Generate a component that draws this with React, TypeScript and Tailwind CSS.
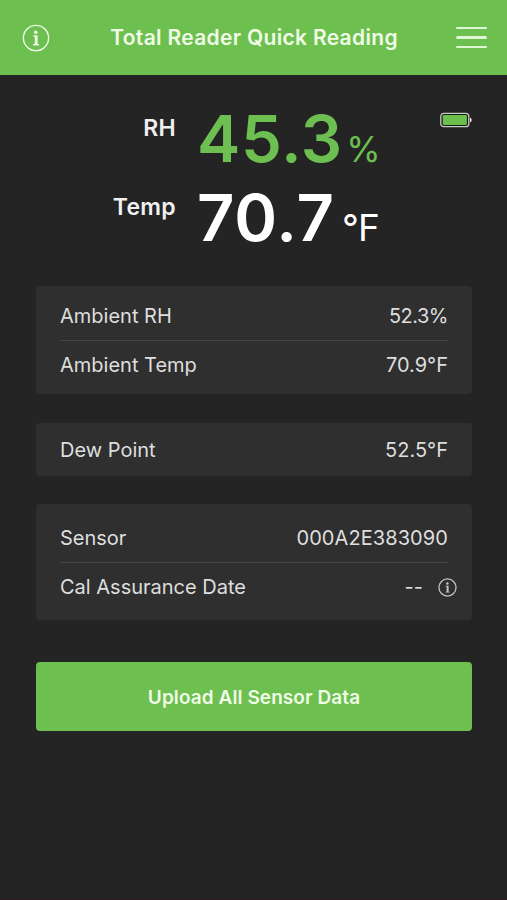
import type { ReactNode } from "react";

function InfoIcon({ className, stroke }: { className: string; stroke: number }) {
  return (
    <svg viewBox="0 0 28 28" className={className} fill="none" stroke="currentColor">
      <circle cx="14" cy="14" r="12.6" strokeWidth={stroke} />
      <circle cx="13.8" cy="8.2" r="1.8" fill="currentColor" stroke="none" />
      <path
        d="M11.2 11.3h4.4v8.8h1.5v1.3h-6v-1.3h1.7v-7.5h-1.6z"
        fill="currentColor"
        stroke="none"
      />
    </svg>
  );
}

function Battery() {
  return (
    <svg width="32" height="16" viewBox="0 0 32 16" className="block">
      <rect x="0.8" y="1.3" width="28" height="13.4" rx="3" fill="#161a14" stroke="#c9cbc6" strokeWidth="1.3" />
      <rect x="2.7" y="3.1" width="24.2" height="9.8" rx="1.2" fill="#6cbf4b" />
      <path d="M30 5.6q1.7 .6 1.7 2.4t-1.7 2.4z" fill="#e4e4e4" />
    </svg>
  );
}

function Row({ label, children }: { label: string; children: ReactNode }) {
  return (
    <div className="flex h-12 items-center justify-between">
      <span>{label}</span>
      {children}
    </div>
  );
}

export default function App() {
  return (
    <div className="flex h-[900px] w-[507px] flex-col bg-[#242424] font-['Inter',sans-serif] text-[#dedede]">
      <header className="flex h-[75px] shrink-0 items-center justify-between bg-[#6dbf4f] pr-5 pl-[22px] text-[#effce6]">
        <InfoIcon className="size-7" stroke={1.4} />
        <h1 className="mt-px ml-[2px] text-[21px] leading-[26px] font-semibold tracking-[0.32px] whitespace-nowrap">
          Total Reader Quick Reading
        </h1>
        <div className="flex w-[31px] flex-col gap-[7px]">
          <span className="h-[2.5px] rounded-full bg-[#dff6d3]" />
          <span className="h-[2.5px] rounded-full bg-[#dff6d3]" />
          <span className="h-[2.5px] rounded-full bg-[#dff6d3]" />
        </div>
      </header>

      <section className="flex h-[211px] shrink-0 pt-8 pr-[35px]">
        <div className="flex w-[176px] flex-col text-right text-[23px] leading-[42px] font-semibold tracking-[0.3px] text-[#f0f0f0]">
          <span className="h-[79px]">RH</span>
          <span>Temp</span>
        </div>
        <div className="ml-[21px] flex w-[182px] flex-col">
          <div className="flex h-[79px] items-baseline justify-between text-[#6cbf50]">
            <span className="text-[65px] leading-[64px] font-[560] tracking-[0.7px]">45.3</span>
            <span className="text-[35px] leading-[40px] font-normal tracking-[-1.6px]">%</span>
          </div>
          <div className="flex items-baseline justify-between text-white">
            <span className="text-[65px] leading-[64px] font-[560] tracking-[0.9px]">70.7</span>
            <span className="text-[37px] leading-[40px] font-normal tracking-[-0.8px]">°F</span>
          </div>
        </div>
        <div className="mt-[5px] ml-auto">
          <Battery />
        </div>
      </section>

      <main className="flex flex-col pr-[35px] pl-9 text-[20px] leading-6">
        <section className="h-[108px] rounded-[4px] bg-[#2f2f2f] px-6 pt-[6px]">
          <Row label="Ambient RH"><span className="tracking-[-0.5px]">52.3%</span></Row>
          <div className="h-px bg-[#444]" />
          <Row label="Ambient Temp"><span>70.9°F</span></Row>
        </section>
        <section className="mt-[29px] h-[53px] rounded-[4px] bg-[#2f2f2f] px-6 pt-[3px]">
          <Row label="Dew Point"><span>52.5°F</span></Row>
        </section>
        <section className="mt-7 h-[116px] rounded-[4px] bg-[#2f2f2f] px-6 pt-[10px]">
          <Row label="Sensor"><span className="tracking-[0.08px]">000A2E383090</span></Row>
          <div className="h-px bg-[#444]" />
          <Row label="Cal Assurance Date">
            <span className="-mr-[9px] flex items-center gap-[15px]">
              <span>--</span>
              <InfoIcon className="size-[19px] text-[#c8c8c8]" stroke={1.8} />
            </span>
          </Row>
        </section>
        <button className="mt-[42px] h-[69px] rounded-[4px] bg-[#6dbf4f] pt-[2px] text-[19px] font-semibold tracking-[0.08px] text-[#effce6]">
          Upload All Sensor Data
        </button>
      </main>
      <div className="mt-auto h-px bg-[#2c1c22]" />
    </div>
  );
}
